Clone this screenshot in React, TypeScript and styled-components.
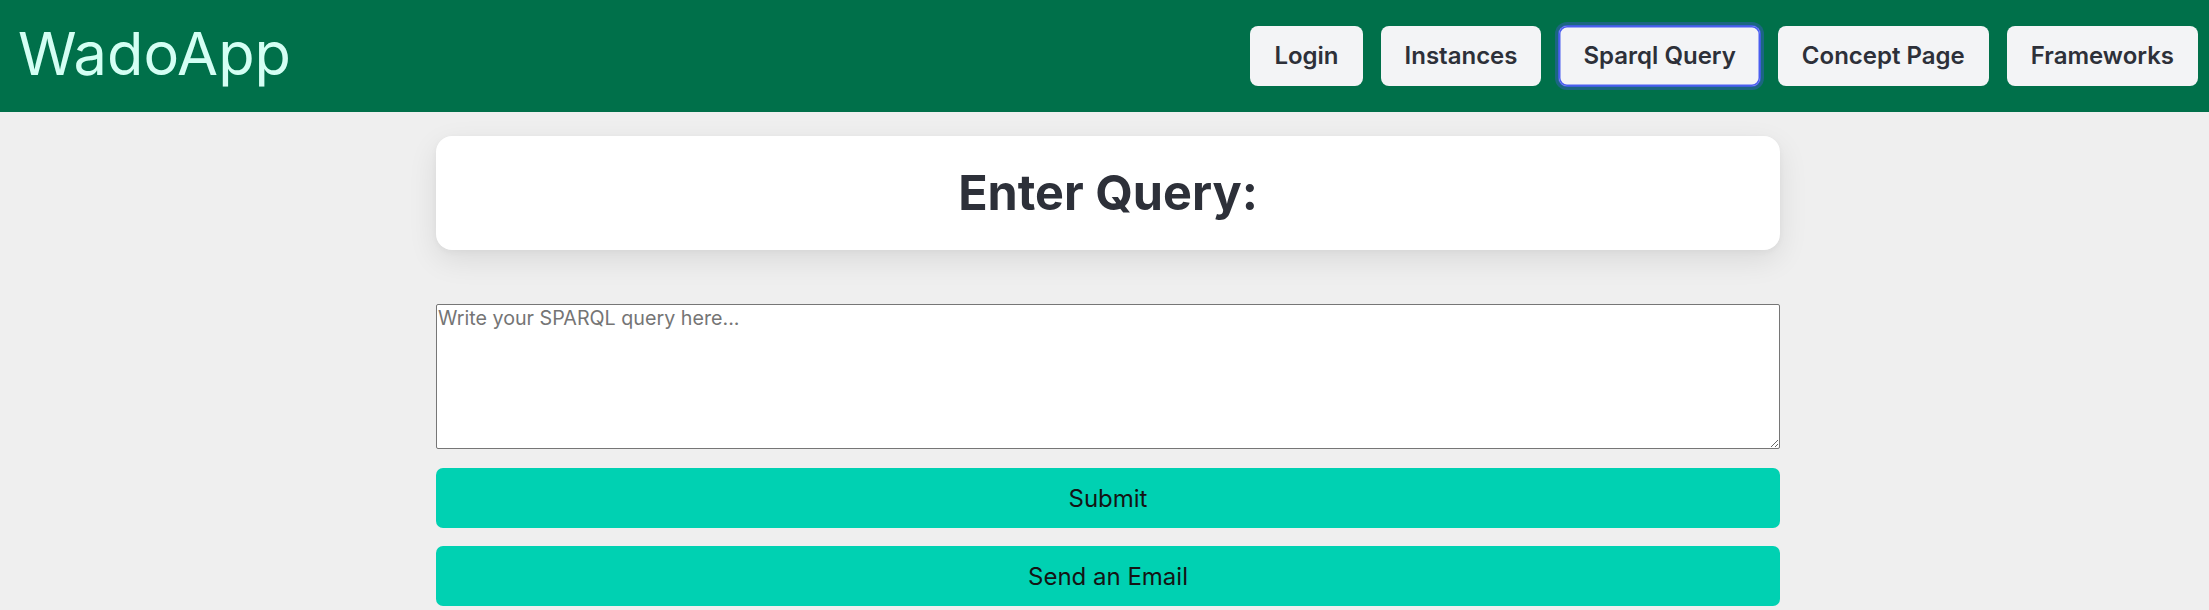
import React from "react";
import styled, { createGlobalStyle } from "styled-components";

const GlobalStyle = createGlobalStyle`
  html, body {
    margin: 0;
    padding: 0;
    background: #efefef;
    font-family: Inter, "Noto Sans", sans-serif;
  }
  * { box-sizing: border-box; }
`;

const Header = styled.header`
  display: flex;
  align-items: center;
  justify-content: space-between;
  height: 112px;
  padding: 0 11px 0 18px;
  background: #00704a;
`;

const Brand = styled.div`
  font-family: Inter, sans-serif;
  font-size: 59.5px;
  font-weight: 400;
  color: #d4fff4;
  line-height: 1;
  padding-bottom: 4px;
`;

const Nav = styled.nav`
  display: flex;
  align-items: center;
  gap: 18px;
`;

const NavButton = styled.button<{ $active?: boolean }>`
  height: 60px;
  padding: 0 24px 2px;
  border: none;
  border-radius: 8px;
  background: #f3f4f6;
  color: #2d3039;
  font-family: Inter, sans-serif;
  font-size: 24px;
  font-weight: 600;
  cursor: pointer;
  box-shadow: ${(p) =>
    p.$active
      ? "inset 0 0 0 1.5px #4a5ef0, 0 0 0 1px #3d5fd8, 0 0 0 4px rgba(60, 90, 200, 0.45)"
      : "none"};
`;

const Main = styled.main`
  display: flex;
  flex-direction: column;
  align-items: center;
  padding: 24px 0 0 7px;
`;

const Column = styled.div`
  width: 1344px;
  display: flex;
  flex-direction: column;
`;

const TitleCard = styled.div`
  background: #fff;
  border-radius: 16px;
  padding: 28px 0;
  box-shadow: 0 10px 30px rgba(0, 0, 0, 0.09), 0 2px 6px rgba(0, 0, 0, 0.04);
  text-align: center;
`;

const Title = styled.h1`
  margin: 0;
  font-family: Inter, sans-serif;
  font-size: 48.5px;
  line-height: 58px;
  font-weight: 700;
  color: #2d3039;
`;

const QueryInput = styled.textarea`
  display: block;
  margin-top: 54px;
  width: 100%;
  height: 145px;
  padding: 1px 1px;
  border: 1px solid #767676;
  border-radius: 2px;
  background: #fff;
  font-family: Inter, sans-serif;
  font-size: 19.7px;
  color: #222;
  &::placeholder {
    color: #757575;
  }
`;

const ActionButton = styled.button<{ $gap: number }>`
  margin-top: ${(p) => p.$gap}px;
  height: 60px;
  width: 100%;
  border: none;
  border-radius: 7px;
  background: #00d1b2;
  color: #141414;
  font-family: Inter, sans-serif;
  font-size: 24px;
  font-weight: 400;
  cursor: pointer;
`;

export default function App() {
  const links = ["Login", "Instances", "Sparql Query", "Concept Page", "Frameworks"];
  return (
    <>
      <GlobalStyle />
      <Header>
        <Brand>WadoApp</Brand>
        <Nav>
          {links.map((l) => (
            <NavButton key={l} $active={l === "Sparql Query"}>
              {l}
            </NavButton>
          ))}
        </Nav>
      </Header>
      <Main>
        <Column>
          <TitleCard>
            <Title>Enter Query:</Title>
          </TitleCard>
          <QueryInput placeholder="Write your SPARQL query here..." />
          <ActionButton $gap={19}>Submit</ActionButton>
          <ActionButton $gap={18}>Send an Email</ActionButton>
        </Column>
      </Main>
    </>
  );
}
